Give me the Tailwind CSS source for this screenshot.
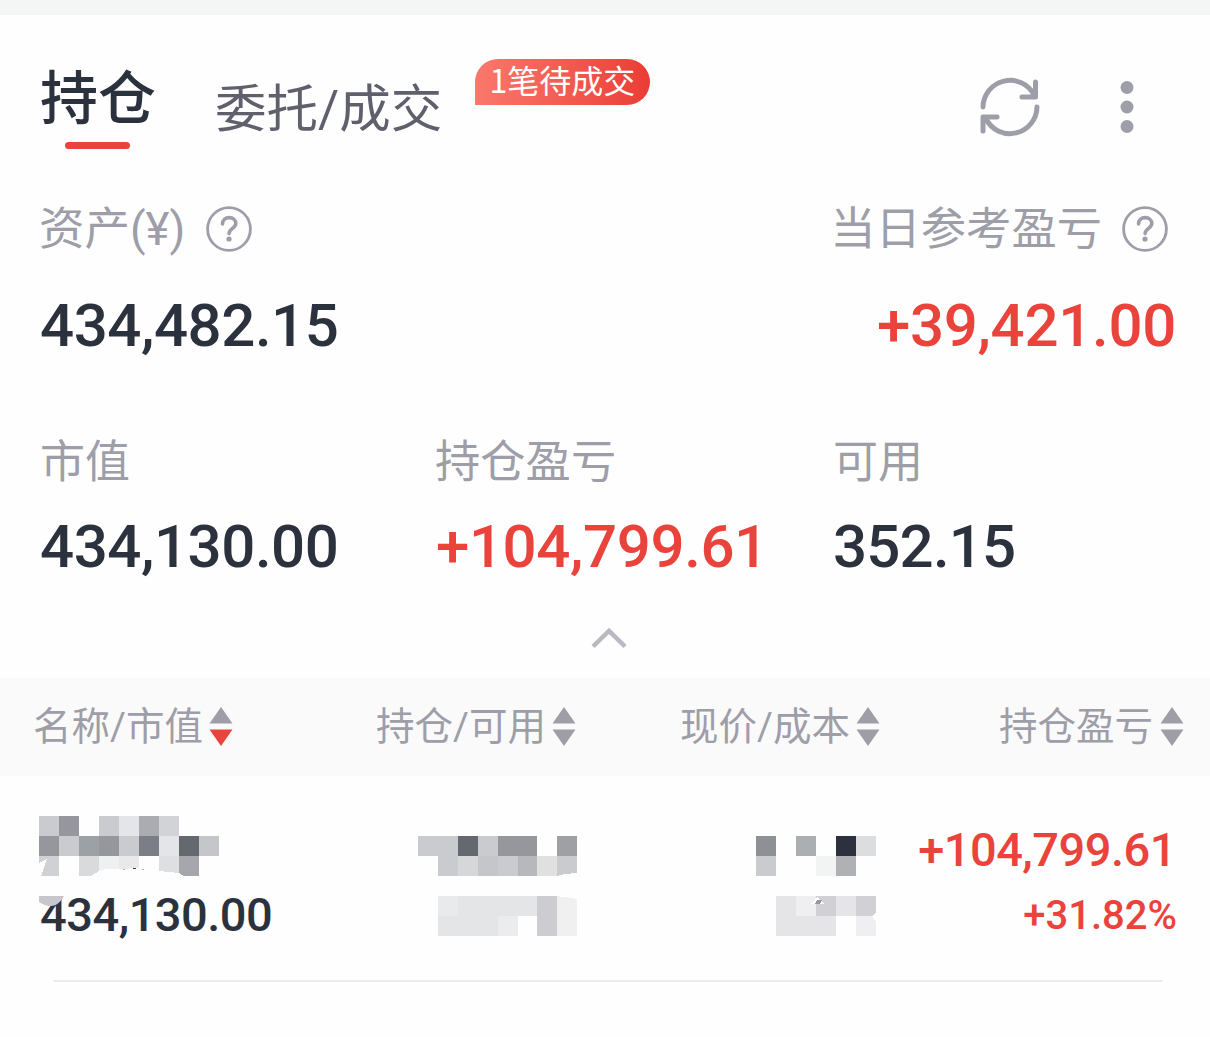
<!DOCTYPE html>
<html lang="zh-CN">
  <head>
    <meta charset="UTF-8" />
    <meta name="viewport" content="width=device-width, initial-scale=1.0" />
    <title>持仓</title>
    <script src="https://cdn.jsdelivr.net/npm/@tailwindcss/browser@4"></script>
  </head>
  <body
    class="h-[1037px] w-[1210px] overflow-hidden bg-[#fefefe] font-['Noto_Sans_CJK_SC',sans-serif] text-[#2b313d] whitespace-nowrap"
  >
    <div class="h-[15px] bg-[#f4f6f6]"></div>

    <!-- Tabs -->
    <header class="flex h-[175px] items-start pl-10">
      <div class="w-[115px] pt-[47px]">
        <h1 class="text-[58px] leading-[64px] font-medium">持仓</h1>
        <div class="mx-auto mt-[16px] h-[7px] w-[65px] rounded-full bg-[#e9433b]"></div>
      </div>
      <div class="ml-[60px] h-[120px] w-[227px] pt-[60px] text-[51.5px] leading-[60px] text-[#5f606c]">委托<span class="font-[Roboto]">/</span>成交</div>
      <div
        class="mt-[44px] ml-[33px] h-[46px] w-[175px] rounded-t-[23px] rounded-br-[23px] bg-linear-to-r from-[#fa776c] to-[#ea3c35] text-center text-[32px] leading-[40px] text-white"
      >
        1笔待成交
      </div>
      <div class="mt-[60px] mr-[73px] ml-auto flex items-center">
        <svg class="h-[64px] w-[64px]" viewBox="0 0 64 64" fill="none" stroke="#9e9ea9" stroke-width="5" stroke-linecap="round" stroke-linejoin="round">
          <path d="M5 32a27 27 0 0 1 51-12" />
          <path d="M57.500 7v15H44" />
          <path d="M59 32a27 27 0 0 1-51 12" />
          <path d="M5 56V42h14" />
        </svg>
        <svg class="ml-[75px] h-[64px] w-[20px]" viewBox="0 0 20 64" fill="#9e9ea9">
          <circle cx="10" cy="12.500" r="6.500" />
          <circle cx="10" cy="32" r="6.500" />
          <circle cx="10" cy="51.500" r="6.500" />
        </svg>
      </div>
    </header>

    <!-- Assets summary -->
    <section class="flex h-[240px] justify-between pr-[34px] pl-10">
      <div>
        <div class="-ml-px flex h-[72px] items-center text-[45.5px] leading-[70px] text-[#9e9ea9]">
          <span class="h-[72px]">资产<span class="font-[Roboto]">(¥)</span></span>
          <svg class="mt-[6px] ml-[21px] h-[46px] w-[46px]" viewBox="0 0 46 46" fill="none" stroke="#9e9ea9" stroke-width="2.800">
            <circle cx="23" cy="23" r="21.400" />
            <path stroke-width="3.600" stroke-linecap="round" d="M16.500 18c0-4 3-6.400 6.700-6.400s6.600 2.400 6.600 6c0 4.600-6.700 5-6.700 10" />
            <circle cx="23" cy="33" r="2.600" fill="#9e9ea9" stroke="none" />
          </svg>
        </div>
        <div class="mt-[28px] font-[Roboto] text-[60px] leading-[72px] font-medium tracking-[-0.45px]">434,482.15</div>
      </div>
      <div class="flex flex-col items-end">
        <div class="mr-[8px] flex h-[72px] items-center text-[45.300px] leading-[70px] text-[#9e9ea9]">
          <span class="-ml-[2px] h-[72px]">当日参考盈亏</span>
          <svg class="mt-[6px] ml-[20px] h-[46px] w-[46px]" viewBox="0 0 46 46" fill="none" stroke="#9e9ea9" stroke-width="2.800">
            <circle cx="23" cy="23" r="21.400" />
            <path stroke-width="3.600" stroke-linecap="round" d="M16.500 18c0-4 3-6.400 6.700-6.400s6.600 2.400 6.600 6c0 4.600-6.700 5-6.700 10" />
            <circle cx="23" cy="33" r="2.600" fill="#9e9ea9" stroke="none" />
          </svg>
        </div>
        <div class="mt-[28px] font-[Roboto] text-[60px] leading-[72px] font-medium tracking-[-0.3px] text-[#e9433b]">+39,421.00</div>
      </div>
    </section>

    <section class="grid h-[248px] grid-cols-[396px_397px_1fr] content-start pl-10">
      <div class="text-[45px] leading-[58px] text-[#9e9ea9]">市值</div>
      <div class="-ml-px text-[45.300px] leading-[57px] text-[#9e9ea9]">持仓盈亏</div>
      <div class="text-[45px] leading-[58px] text-[#9e9ea9]">可用</div>
      <div class="mt-[23px] font-[Roboto] text-[60px] leading-[72px] font-medium tracking-[-0.45px]">434,130.00</div>
      <div class="mt-[23px] font-[Roboto] text-[60px] leading-[72px] font-medium tracking-[-0.4px] text-[#e9433b]">+104,799.61</div>
      <div class="mt-[23px] font-[Roboto] text-[60px] leading-[72px] font-medium tracking-[-0.8px]">352.15</div>
      <svg class="col-span-3 mt-[43px] ml-[549px] h-[24px] w-[40px]" viewBox="0 0 40 24" fill="none" stroke="#b9b9c1" stroke-width="4.500">
        <path d="M4 20.500 20 5l16 15.500" />
      </svg>
    </section>

    <!-- Column heads -->
    <div class="flex h-[98px] items-center bg-[#fafafa] pl-[33px] text-[38.5px] leading-[90px] text-[#9e9ea9]">
      <div class="flex w-[343px] items-center">
        <span class="h-[98px] w-[176px]">名称<span class="font-[Roboto]">/</span>市值</span>
        <svg class="mb-[2px] h-[39px] w-[24px]" viewBox="0 0 24 39" fill="#9e9ea9">
          <path d="M12 0l11.500 16.500H.5z" />
          <path fill="#e9433b" d="M12 39 .5 22.500h23z" />
        </svg>
      </div>
      <div class="flex w-[304px] items-center">
        <span class="h-[98px] w-[176px]">持仓<span class="font-[Roboto]">/</span>可用</span>
        <svg class="mb-[2px] h-[39px] w-[24px]" viewBox="0 0 24 39" fill="#9e9ea9">
          <path d="M12 0l11.500 16.500H.5z" />
          <path d="M12 39 .5 22.500h23z" />
        </svg>
      </div>
      <div class="flex w-[319px] items-center">
        <span class="h-[98px] w-[176px]">现价<span class="font-[Roboto]">/</span>成本</span>
        <svg class="mb-[2px] h-[39px] w-[24px]" viewBox="0 0 24 39" fill="#9e9ea9">
          <path d="M12 0l11.500 16.500H.5z" />
          <path d="M12 39 .5 22.500h23z" />
        </svg>
      </div>
      <div class="flex items-center">
        <span class="h-[98px] w-[161px]">持仓盈亏</span>
        <svg class="mb-[2px] h-[39px] w-[24px]" viewBox="0 0 24 39" fill="#9e9ea9">
          <path d="M12 0l11.500 16.500H.5z" />
          <path d="M12 39 .5 22.500h23z" />
        </svg>
      </div>
    </div>

    <!-- Holding row, name and prices are masked -->
    <div class="flex h-[204px] items-start pt-[40px] pl-[39px]">
      <div class="relative w-[379px]">
        <svg class="h-[60px] w-[180px]" viewBox="0 0 180 60" shape-rendering="crispEdges">
          <path fill="#cacbcf" d="M0 0h20v20H0zM60 0h20v20H60zM20 20h20v20H20zM80 20h20v20H80z" />
          <path fill="#96979c" d="M20 0h20v20H20zM0 20h20v20H0zM60 20h20v20H60z" />
          <path fill="#e4e5e8" d="M80 0h20v20H80zM120 20h20v20h-20z" />
          <path fill="#abacb1" d="M100 0h20v20h-20z" />
          <path fill="#d2d3d7" d="M120 0h20v20h-20z" />
          <path fill="#9ca1a5" d="M40 20h20v20H40z" />
          <path fill="#7b7e87" d="M100 20h20v20h-20z" />
          <path fill="#646970" d="M140 20h20v20h-20z" />
          <path fill="#c5c6ca" d="M160 20h20v20h-20z" />
          <path fill="#d0d1d5" d="M0 47l8-4-6 17h18V40H0z" />
          <path fill="#d9dadc" d="M40 40h20v15l-8 5H40z" />
          <path fill="#eff0f2" d="M60 40h20v13H66l-6 2z" />
          <path fill="#e9e9ea" d="M80 40h20v12l-20 1z" />
          <path fill="#dedfe1" d="M120 40h20v17l-20-2z" />
          <path fill="#a6a7ac" d="M140 40h20v20h-15l-5-3z" />
          <path fill="#3c404b" d="M94 52h3v1h-3z" />
          <path fill="#b0b1b5" d="M84 53h2v1h-2zM103 53h2v1h-2z" />
        </svg>
        <div class="mt-[11px] ml-px font-[Roboto] text-[47px] leading-[56px] font-medium tracking-[-0.5px]">434,130.00</div>
        <svg class="absolute top-[80px] left-0 h-[10px] w-[25px]" viewBox="0 0 25 10" fill="#c6c7ca">
          <path d="M0 0h25c-3 6-8 10-13 10C7 10 3 8 0 6z" />
        </svg>
      </div>
      <svg class="mt-[20px] h-[101px] w-[338px]" viewBox="0 0 338 101" shape-rendering="crispEdges">
        <path fill="#cacbcf" d="M0 0h40v20H0zM60 0h20v20H60zM20 20h20v20H20zM80 20h20v20H80zM139 20h20v17l-12 1-8 2z" />
        <path fill="#646970" d="M40 0h20v20H40z" />
        <path fill="#96979c" d="M80 0h39v20H80z" />
        <path fill="#9fa0a4" d="M139 0h20v20h-20z" />
        <path fill="#d6d7d8" d="M40 20h20v20H40z" />
        <path fill="#c5c6ca" d="M60 20h20v20H60z" />
        <path fill="#b7b8bc" d="M100 20h20v20h-20z" />
        <path fill="#e0e0e1" d="M119 20h20v20h-20z" />
        <path fill="#e9eaec" d="M20 60h20v20H20z" />
        <path fill="#e4e5e7" d="M40 60h79v20H80v20H20V80h20z" />
        <path fill="#ececee" d="M80 80h20v20H80z" />
        <path fill="#cdcdd1" d="M119 60h20v40h-20z" />
        <path fill="#f0f0f0" d="M139 60l20 3v37h-20z" />
      </svg>
      <svg class="mt-[20px] h-[101px] w-[120px]" viewBox="0 0 120 101" shape-rendering="crispEdges">
        <path fill="#8d9195" d="M0 0h20v20H0z" />
        <path fill="#abafb2" d="M40 0h20v20H40z" />
        <path fill="#2d313d" d="M80 0h20v20H80z" />
        <path fill="#dcdddf" d="M100 0h20v20h-20z" />
        <path fill="#cacbcf" d="M0 20h20v20H0z" />
        <path fill="#f2f4f4" d="M60 20h20v20H60z" />
        <path fill="#b0b1b5" d="M80 20h20v20H80z" />
        <path fill="#e5e5e7" d="M20 60h20v20h40v20H20zM80 60h20v20H80z" />
        <path fill="#efeff1" d="M40 60h20v20H40zM100 80h20v20h-20z" />
        <path fill="#d1d1d5" d="M60 60h20v20H60zM100 60h20v17l-4 3h-16z" />
        <path fill="#fff" d="M55 68l6-7 8 7zM120 76l-4 4 4 6z" />
        <path fill="#96979c" d="M61 64h5l-2 4h-5z" />
      </svg>
      <div class="mr-[34px] ml-auto text-right font-[Roboto] font-medium text-[#e9433b]">
        <div class="mt-[6px] text-[47px] leading-[56px] tracking-[-0.5px]">+104,799.61</div>
        <div class="mt-[13px] -mr-px text-[40px] leading-[50px]">+31.82%</div>
      </div>
    </div>
    <div class="mr-[47px] ml-[53px] h-[2px] bg-[#ececec]"></div>
  </body>
</html>
